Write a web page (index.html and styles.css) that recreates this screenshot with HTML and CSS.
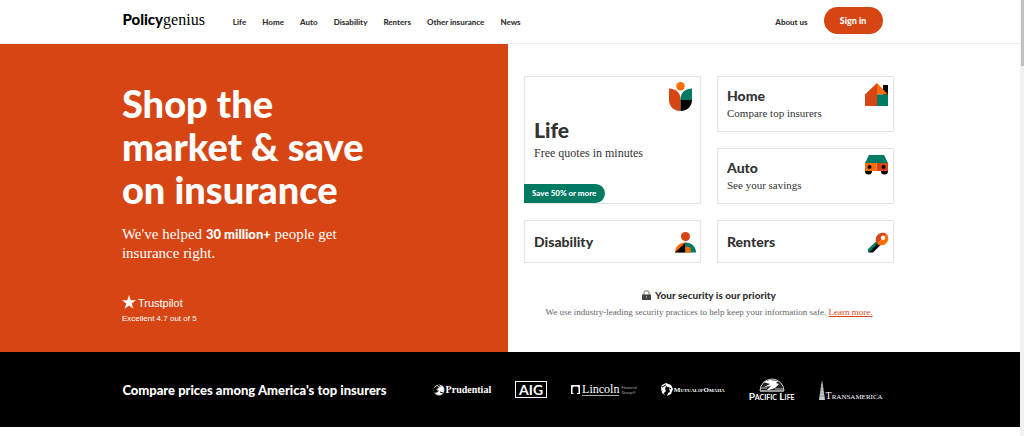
FILE: index.html
```
<!DOCTYPE html>
<html lang="en">
<head>
    <meta charset="utf-8">
    <title>Policygenius</title>
    <link rel="stylesheet" href="styles.css">
</head>
<body>
    <div class="page">
        <header class="header">
            <a class="logo" href="#"><strong>Policy</strong><span>genius</span></a>
            <nav class="nav">
                <a href="#">Life</a>
                <a href="#">Home</a>
                <a href="#">Auto</a>
                <a href="#">Disability</a>
                <a href="#">Renters</a>
                <a href="#">Other insurance</a>
                <a href="#">News</a>
            </nav>
            <a class="about" href="#">About us</a>
            <button class="sign-in" type="button">Sign in</button>
        </header>
        <main class="hero">
            <section class="intro">
                <h1>Shop the<br>market &amp; save<br>on insurance</h1>
                <p class="lead">We've helped <strong>30 million+</strong> people get<br>insurance right.</p>
                <div class="trust">
                    <svg width="14" height="14" viewBox="0 0 14 14"><path fill="#fff" d="M7 0l1.700 5.200H14L9.700 8.400l1.700 5.300L7 10.400l-4.400 3.300 1.700-5.300L0 5.200h5.300z"/></svg>
                    <span>Trustpilot</span>
                </div>
                <p class="rating">Excellent 4.7 out of 5</p>
            </section>
            <section class="products">
                <div class="cards">
                    <a class="card card-life" href="#">
                        <h2>Life</h2>
                        <p>Free quotes in minutes</p>
                        <svg class="icon" width="23" height="29" viewBox="0 0 23 29">
                            <circle cx="11.500" cy="4.200" r="4.200" fill="#ff6d00"/>
                            <path fill="#d64513" d="M0 6.500c6 0 11.500 4 11.500 10.500v12C5 29 0 24.500 0 18z"/>
                            <path fill="#007a63" d="M23 6.500V18H11.500v-1C11.500 10.500 17 6.500 23 6.500z"/>
                            <path d="M11.500 18H23c0 6.500-5 11-11.500 11z"/>
                        </svg>
                        <span class="badge">Save 50% or more</span>
                    </a>
                    <a class="card" href="#">
                        <h2>Home</h2>
                        <p>Compare top insurers</p>
                        <svg class="icon" width="23" height="23" viewBox="0 0 23 23">
                            <path d="M18 2h5v10h-5z"/>
                            <path fill="#d64513" d="M12 0v23H0V11.500z"/>
                            <path fill="#ff6d00" d="M12 0l11 11.500H12z"/>
                            <path fill="#007a63" d="M12 11.500h11V23H12z"/>
                        </svg>
                    </a>
                    <a class="card" href="#">
                        <h2>Auto</h2>
                        <p>See your savings</p>
                        <svg class="icon" width="23" height="20" viewBox="0 0 23 20">
                            <path d="M0 14h7v2a3.500 3.500 0 0 1-7 0zM16 14h7v2a3.500 3.500 0 0 1-7 0z"/>
                            <path fill="#007a63" d="M4 0h15l4 8H0z"/>
                            <path fill="#ff6d00" d="M0 8h11.500v8H0z"/>
                            <path fill="#d64513" d="M11.500 8H23v8H11.500z"/>
                            <circle cx="4.500" cy="12" r="2"/>
                            <circle cx="18.500" cy="12" r="2"/>
                        </svg>
                    </a>
                    <a class="card card-small" href="#">
                        <h2>Disability</h2>
                        <svg class="icon" width="21" height="21" viewBox="0 0 21 21">
                            <circle cx="10.500" cy="4.500" r="4.500" fill="#d64513"/>
                            <path fill="#ff6d00" d="M0 20.500C0 14.500 4.500 10.500 10.500 10.500v10z"/>
                            <path d="M10.500 10.500v10H0z"/>
                            <path fill="#007a63" d="M10.500 10.500c6 0 10.500 4 10.500 10H10.500z"/>
                            <path fill="#ff6d00" d="M10.500 14.800h2.300a2.900 2.900 0 0 1 2.900 2.900v2.800h-5.200z"/>
                        </svg>
                    </a>
                    <a class="card card-small" href="#">
                        <h2>Renters</h2>
                        <svg class="icon" width="21" height="21" viewBox="0 0 21 21">
                            <path fill="#007a63" d="M8 9.500l2.500 2.300L1.500 20.500H0V17z"/>
                            <path d="M10 11l2.500 2-7.500 7.500H1z"/>
                            <path fill="#d64513" d="M9.100 11.900A7 7 0 0 1 18.900 2.100z"/>
                            <path fill="#ff6d00" d="M18.900 2.100A7 7 0 0 1 9.100 11.900z"/>
                            <circle cx="15" cy="5.800" r="2.200" fill="#fff"/>
                        </svg>
                    </a>
                </div>
                <div class="security">
                    <h3>
                        <svg width="9" height="10" viewBox="0 0 9 10"><path fill="none" stroke="#999" stroke-width="1.300" d="M2 5V3a2.500 2.300 0 0 1 5 0v2"/><path fill="#444" d="M0 4.500h9V10H0z"/><path fill="#999" d="M4 6h1v2H4z"/></svg>
                        Your security is our priority
                    </h3>
                    <p>We use industry-leading security practices to help keep your information safe. <a href="#">Learn more.</a></p>
                </div>
            </section>
        </main>
        <section class="insurers">
            <h2>Compare prices among America's top insurers</h2>
            <ul class="brands">
                <li class="prudential">
                    <svg width="12" height="12" viewBox="0 0 12 12"><circle cx="6" cy="6" r="5.500" fill="#bbb"/><path d="M0 5l4-3 2 1-3 3 3 1-4 2-1-1z"/><path fill="#fff" d="M5 5l4-3 2 2-1 5-3 2-4-1 3-3z"/><path stroke="#000" d="M5 1l2 1M7 8l3 1"/></svg>
                    Prudential
                </li>
                <li class="aig">AIG</li>
                <li class="lincoln">
                    <svg width="9" height="10" viewBox="0 0 9 10"><path fill="#fff" d="M0 0h9v9H6V8h1.500V2.500L6 1.500H3L1.500 2.500V8h1v1H0z"/></svg>
                    <span class="lincoln-name">Lincoln</span>
                    <span class="lincoln-group">Financial<br>Group&reg;</span>
                </li>
                <li class="mutual">
                    <svg width="12" height="13" viewBox="0 0 12 13"><path fill="#fff" d="M5 0l5 2 2 4-2 5-4 2 1-3 2-1-1-4-3-2-1 3 1 2-2 2 1 2-3-2-1-5 1-3z"/><path stroke="#000" d="M1 4l4-2M3 11l3-3M7 4l3 2"/></svg>
                    <span>Mutual<i>of</i>Omaha</span>
                </li>
                <li class="pacific">
                    <svg width="26" height="14" viewBox="0 0 26 14"><path fill="#222" stroke="#ccc" d="M1 13a12 12 0 0 1 24 0z"/><path fill="#fff" d="M4 4l7-2 8 1-2 2 3 1-4 4-6 2H8l4-4-7 1 6-3z"/><path stroke="#bbb" d="M2 10h6M16 11h8M1 13h24"/></svg>
                    <span>Pacific Life</span>
                </li>
                <li class="transamerica">
                    <svg width="6" height="20" viewBox="0 0 6 20"><path fill="#ccc" d="M3 0l1 6 2 14H0L2 6z"/><path stroke="#444" stroke-width=".5" d="M2 7h2M1.500 10h3M1.500 13h3M1 16h4"/></svg>
                    <span>Transamerica</span>
                </li>
            </ul>
        </section>
    </div>
    <div class="scroll-track"><div class="scroll-thumb"></div></div>
</body>
</html>
```
FILE: styles.css
```
* {
    box-sizing: border-box;
}
body {
    margin: 0;
    display: flex;
    min-height: 100vh;
    background-color: #fff;
    color: #333;
    font-family: Lato, sans-serif;
}
h1, h2, h3, p, ul {
    margin: 0;
    padding: 0;
}
a {
    color: inherit;
    text-decoration: none;
}
svg {
    display: block;
    flex: none;
}
.page {
    flex: 1;
}
.header {
    display: flex;
    align-items: center;
    height: 44px;
    padding: 0 calc(12% + 15px) 2px 12%;
    border-bottom: 1px solid #eee;
}
.logo {
    padding-bottom: 3px;
    color: #000;
    font-family: "Liberation Serif", serif;
    font-size: 16px;
}
.logo strong {
    font-family: Lato, sans-serif;
    font-size: 15px;
    font-weight: 900;
}
.nav {
    display: flex;
    flex: 1;
    gap: 16px;
    margin-left: 28px;
}
.nav a,
.about {
    padding-top: 3px;
    font-size: 8px;
    font-weight: 900;
    white-space: nowrap;
}
.sign-in {
    width: 59px;
    height: 27px;
    margin-left: 16px;
    padding: 0;
    border: none;
    border-radius: 14px;
    background-color: #d64513;
    color: #fff;
    font-family: Lato, sans-serif;
    font-size: 9px;
    font-weight: 900;
}
.hero {
    display: grid;
    grid-template-columns: 127fr 128fr;
    min-height: 308px;
}
.intro {
    padding: 38px 0 24px 24%;
    background-color: #d64513;
    color: #fff;
}
h1 {
    font-size: 38px;
    font-weight: 900;
    line-height: 43px;
    white-space: nowrap;
}
.lead {
    margin-top: 14px;
    font-family: "Liberation Serif", serif;
    font-size: 15px;
    line-height: 19px;
}
.lead strong {
    font-family: Lato, sans-serif;
    font-size: 13px;
    font-weight: 900;
}
.trust {
    display: flex;
    align-items: center;
    gap: 2px;
    margin-top: 31px;
    font-family: "Liberation Sans", sans-serif;
    font-size: 11px;
}
.trust span {
    padding-top: 3px;
}
.rating {
    margin-top: 4px;
    font-family: "Liberation Sans", sans-serif;
    font-size: 8px;
    line-height: 12px;
}
.products {
    padding: 32px 126px 0 16px;
}
.cards {
    display: grid;
    grid-template-columns: 1fr 1fr;
    grid-template-rows: 56px 56px 43px;
    gap: 16px;
}
.card {
    position: relative;
    display: flex;
    flex-direction: column;
    justify-content: center;
    gap: 2px;
    padding: 0 9px;
    border: 1px solid #e4e4e4;
}
.card h2 {
    font-size: 14px;
    font-weight: 900;
    line-height: 16px;
}
.card p {
    font-family: "Liberation Serif", serif;
    font-size: 11px;
    line-height: 14px;
}
.card .icon {
    position: absolute;
    top: 6px;
    right: 5px;
}
.card-life {
    grid-row: span 2;
}
.card-life h2 {
    font-size: 21px;
    line-height: 24px;
}
.card-life p {
    font-size: 12px;
    line-height: 18px;
}
.card-life .icon {
    top: 5px;
    right: 8px;
}
.card-small .icon {
    top: 11px;
    right: 4px;
}
.badge {
    position: absolute;
    left: -1px;
    bottom: 0;
    padding: 0 9px 0 8px;
    border-radius: 0 10px 10px 0;
    background-color: #007a63;
    color: #fff;
    font-size: 8px;
    font-weight: 900;
    line-height: 19px;
}
.security {
    margin-top: 26px;
    text-align: center;
}
.security h3 {
    display: flex;
    justify-content: center;
    align-items: center;
    gap: 4px;
    font-size: 10px;
    font-weight: 900;
    line-height: 12px;
}
.security p {
    margin-top: 5px;
    color: #666;
    font-family: "Liberation Serif", serif;
    font-size: 9px;
    line-height: 12px;
    white-space: nowrap;
}
.security a {
    color: #d64513;
    text-decoration: underline;
}
.insurers {
    display: flex;
    justify-content: space-between;
    align-items: center;
    height: 75px;
    padding: 0 calc(12% + 15px) 0 12%;
    background-color: #000;
    color: #fff;
}
.insurers h2 {
    font-size: 13px;
    font-weight: 900;
    white-space: nowrap;
}
.brands {
    display: flex;
    justify-content: space-between;
    align-items: center;
    width: 450px;
    list-style: none;
    font-family: "Liberation Serif", serif;
}
.brands li {
    display: flex;
    align-items: center;
    white-space: nowrap;
}
.prudential {
    gap: 1px;
    font-size: 10px;
    font-weight: 700;
}
.aig {
    padding: 0 3px;
    border: 1px solid #fff;
    font-family: Lato, sans-serif;
    font-size: 14px;
    font-weight: 700;
    line-height: 15px;
}
.lincoln {
    gap: 2px;
}
.lincoln-name {
    border-bottom: 1px solid #aaa;
    font-size: 12px;
    line-height: 11px;
}
.lincoln-group {
    color: #aaa;
    font-family: Lato, sans-serif;
    font-size: 4px;
    line-height: 5px;
}
.mutual {
    gap: 1px;
    font-size: 8px;
    font-weight: 700;
    font-variant: small-caps;
}
.mutual span {
    font-size: 7px;
}
.mutual i {
    font-size: 6px;
}
.brands .pacific {
    flex-direction: column;
    font-family: Lato, sans-serif;
    font-size: 10px;
    font-weight: 700;
    line-height: 9px;
    font-variant: small-caps;
}
.brands .transamerica {
    align-items: flex-end;
    gap: 1px;
    font-size: 10px;
    line-height: 9px;
    font-variant: small-caps;
}
.scroll-track {
    width: 4px;
    padding-left: 1px;
    background-color: #f1f1f1;
}
.scroll-thumb {
    height: 66px;
    background-color: #c1c1c1;
}
```
